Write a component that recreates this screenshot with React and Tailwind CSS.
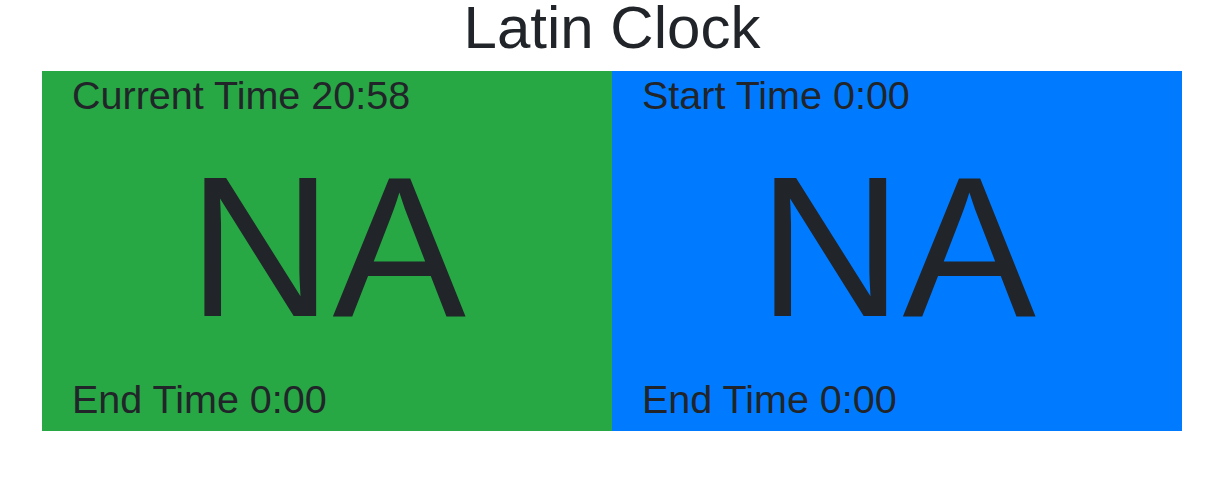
export default function App() {
  const font = { fontFamily: '"Liberation Sans", Arial, sans-serif' };
  const Panel = ({ bg, top, bottom }) => (
    <div className={`flex flex-col h-[360px] ${bg}`}>
      <div className="pt-[1px] pl-[30px] text-[39.5px] leading-[46px]">{top}</div>
      <div className="mt-[14px] text-center text-[200px] leading-[230px]">NA</div>
      <div className="mt-[14px] pl-[30px] text-[39.5px] leading-[46px]">{bottom}</div>
    </div>
  );
  return (
    <div className="w-[1224px] h-[484px] bg-white text-[#212529]" style={font}>
      <h1 className="text-center text-[60px] leading-[56px] mb-[15px] font-normal">Latin Clock</h1>
      <div className="mx-[42px] grid grid-cols-2">
        <Panel bg="bg-[#28a745]" top="Current Time 20:58" bottom="End Time 0:00" />
        <Panel bg="bg-[#007bff]" top="Start Time 0:00" bottom="End Time 0:00" />
      </div>
    </div>
  );
}
